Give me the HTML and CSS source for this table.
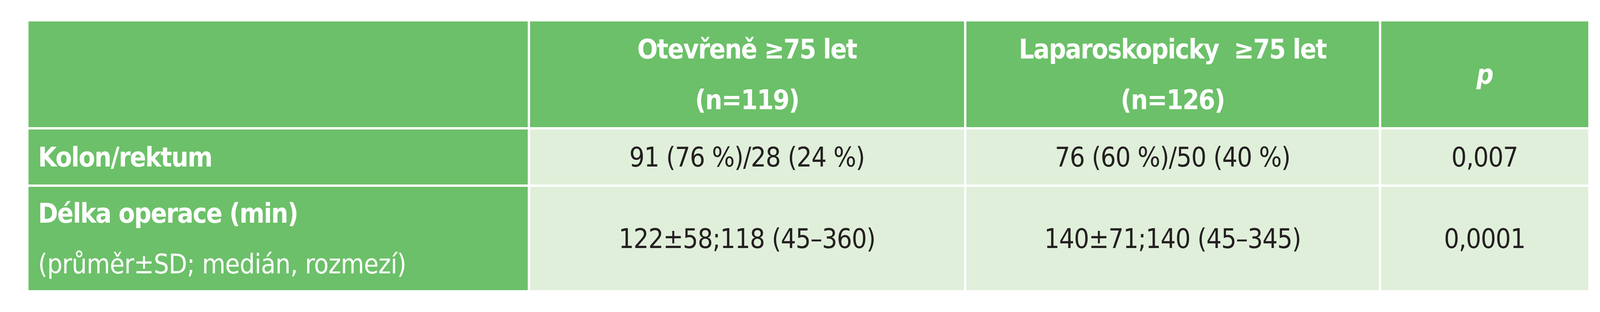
FILE: index.html
```html
<!DOCTYPE html>
<html lang="cs">
<head>
<meta charset="utf-8">
<title>Tabulka</title>
<link rel="stylesheet" href="styles.css">
</head>
<body>
<div class="grid" role="table">
  <div class="cell head label" role="columnheader"></div>
  <div class="cell head" role="columnheader">Otevřeně ≥75 let<br>(n=119)</div>
  <div class="cell head" role="columnheader">Laparoskopicky&nbsp; ≥75 let<br>(n=126)</div>
  <div class="cell head pval" role="columnheader">p</div>

  <div class="cell label" role="rowheader">Kolon/rektum</div>
  <div class="cell value" role="cell">91 (76 %)/28 (24 %)</div>
  <div class="cell value" role="cell">76 (60 %)/50 (40 %)</div>
  <div class="cell value" role="cell">0,007</div>

  <div class="cell label" role="rowheader"><div>Délka operace (min)<br><span class="sub">(průměr±SD; medián, rozmezí)</span></div></div>
  <div class="cell value" role="cell">122±58;118 (45–360)</div>
  <div class="cell value" role="cell">140±71;140 (45–345)</div>
  <div class="cell value" role="cell">0,0001</div>
</div>
</body>
</html>
```
FILE: styles.css
```css
html, body {
  margin: 0;
  padding: 0;
  background: #ffffff;
}

body {
  font-family: "DejaVu Sans Condensed", "DejaVu Sans", sans-serif;
  font-size: min(97px, 1.6733vw);
  line-height: 130px;
  color: #231f20;
}

.grid {
  margin-top: 55px;
  margin-left: calc(100vw * 104 / 5797);
  width: calc(100vw * 5650 / 5797);
  display: grid;
  grid-template-columns: 1810fr 1575fr 1496fr 751fr;
  grid-template-rows: 271px 141px 265px;
  gap: 6px;
}

.cell {
  display: flex;
  align-items: center;
  justify-content: center;
  text-align: center;
  min-width: 0;
}

.head {
  background: #6cc069;
  color: #ffffff;
  font-weight: bold;
  letter-spacing: -0.03em;
}

.value {
  background: #e0efda;
  letter-spacing: -0.018em;
}

.label {
  background: #6cc069;
  color: #ffffff;
  font-weight: bold;
  justify-content: flex-start;
  text-align: left;
  padding-left: calc(100vw * 34 / 5797);
  letter-spacing: -0.03em;
}

.sub {
  font-weight: normal;
  letter-spacing: -0.012em;
}

.pval {
  font-style: italic;
}
```
